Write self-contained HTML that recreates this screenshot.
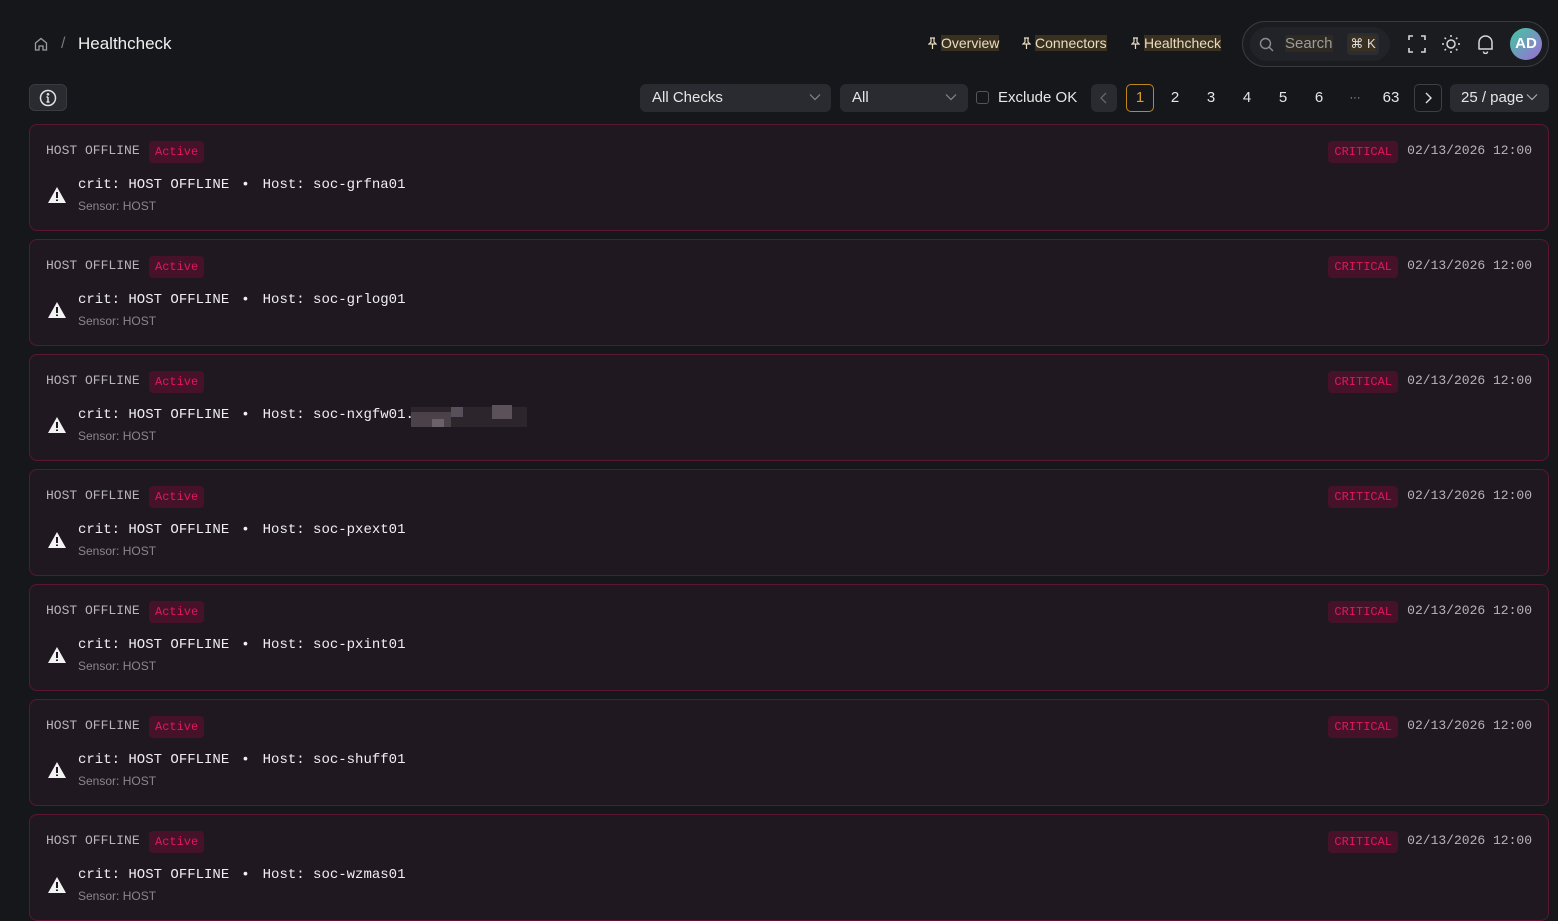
<!DOCTYPE html>
<html><head><meta charset="utf-8"><style>
*{box-sizing:border-box;margin:0;padding:0}
body{width:1558px;height:918px;overflow:hidden;background:#16171b;font-family:"Liberation Sans",sans-serif;color:#e6e6e6;position:relative}
.abs{position:absolute}
.mono{font-family:"Liberation Mono",monospace}
.nav{position:absolute;top:35px;font-size:14px;color:#e8dcc0;white-space:nowrap}
.nav span{background:#3a3020}
.nav svg{vertical-align:-1px;margin-right:4px}
.pill{background:#2a2b30;border-radius:6px}
.card{position:absolute;left:29px;width:1520px;height:107px;background:#201820;border:1px solid #5c1630;border-radius:8px}
.t{position:absolute;left:16px;top:18px;font-size:13px;color:#b8b4bc}
.badge{position:absolute;background:#45122a;color:#e0185a;border-radius:4px;font-size:12px;height:22px;line-height:22px;padding:0 6px}
.main{position:absolute;left:48px;top:52px;font-size:14px;color:#f0eef2;white-space:pre}
.main b{font-weight:normal;margin:0 13px 0 12px}
.sen{position:absolute;left:48px;top:74px;font-size:12px;color:#8a8590}
.date{position:absolute;right:16px;top:18px;font-size:13px;color:#b8b4bc}
.warn{position:absolute;left:17px;top:61px}
.pg{position:absolute;top:87px;font-size:15px;color:#e6e6e6;width:28px;text-align:center;line-height:22px}
</style></head><body>
<svg class="abs" style="left:33px;top:36px" width="16" height="16" viewBox="0 0 16 16" fill="none" stroke="#9a9ca2" stroke-width="1.3"><path d="M2.5 7 8 2.5 13.5 7V14H10V10H6V14H2.5Z"/></svg>
<div class="abs" style="left:61px;top:35px;font-size:16px;color:#777">/</div>
<div class="abs" style="left:78px;top:34px;font-size:17px;color:#f0f0f0">Healthcheck</div>
<div class="nav" style="left:928px"><svg width="9" height="12" viewBox="0 0 9 12" fill="none" stroke="#e8dcc0" stroke-width="1.2"><path d="M2 1h5M3 1v4L1 7h7L6 5V1M4.5 7v5"/></svg><span>Overview</span></div>
<div class="nav" style="left:1022px"><svg width="9" height="12" viewBox="0 0 9 12" fill="none" stroke="#e8dcc0" stroke-width="1.2"><path d="M2 1h5M3 1v4L1 7h7L6 5V1M4.5 7v5"/></svg><span>Connectors</span></div>
<div class="nav" style="left:1131px"><svg width="9" height="12" viewBox="0 0 9 12" fill="none" stroke="#e8dcc0" stroke-width="1.2"><path d="M2 1h5M3 1v4L1 7h7L6 5V1M4.5 7v5"/></svg><span>Healthcheck</span></div>
<div class="abs" style="left:1242px;top:21px;width:307px;height:46px;border:1px solid #3a3b40;border-radius:23px;background:#1b1c20"></div>
<div class="abs" style="left:1250px;top:27px;width:140px;height:34px;border-radius:17px;background:#222328"></div>
<svg class="abs" style="left:1259px;top:37px" width="15" height="15" viewBox="0 0 15 15" fill="none" stroke="#8a8c92" stroke-width="1.4"><circle cx="6.5" cy="6.5" r="5"/><path d="M10.2 10.2 14 14"/></svg>
<div class="abs" style="left:1285px;top:35px;font-size:15px;color:#9a9ca0;background:#2e2a22">Search</div>
<div class="abs" style="left:1347px;top:33px;width:32px;height:22px;background:#2c2d32;border-radius:4px;font-size:13px;color:#ddd;line-height:22px;text-align:center"><span style="background:#3a3020">⌘ K</span></div>
<svg class="abs" style="left:1408px;top:35px" width="18" height="18" viewBox="0 0 18 18" fill="none" stroke="#d8d8d8" stroke-width="1.6"><path d="M1 5V1H5M13 1H17V5M17 13V17H13M5 17H1V13"/></svg>
<svg class="abs" style="left:1441px;top:34px" width="20" height="20" viewBox="0 0 20 20" fill="none" stroke="#d8d8d8" stroke-width="1.5"><circle cx="10" cy="10" r="4"/><path d="M10 1v2M10 17v2M1 10h2M17 10h2M3.6 3.6l1.4 1.4M15 15l1.4 1.4M3.6 16.4 5 15M15 5l1.4-1.4"/></svg>
<svg class="abs" style="left:1476px;top:34px" width="19" height="20" viewBox="0 0 19 20" fill="none" stroke="#d8d8d8" stroke-width="1.5"><path d="M3 15V8.5a6.5 6.5 0 0 1 13 0V15H2.5h14M7.5 17.5a2 2 0 0 0 4 0"/></svg>
<div class="abs" style="left:1510px;top:28px;width:32px;height:32px;border-radius:50%;background:linear-gradient(135deg,#3fc9a0,#a06ad8);color:#fff;font-size:15px;font-weight:bold;text-align:center;line-height:32px">AD</div>
<div class="abs pill" style="left:29px;top:84px;width:38px;height:27px;border:1px solid #3a3b40"></div>
<svg class="abs" style="left:39px;top:89px" width="18" height="18" viewBox="0 0 18 18" fill="none" stroke="#e0e0e0" stroke-width="1.5"><circle cx="9" cy="9" r="7.5"/><path d="M9 8v5M7.5 13h3M7.5 8H9"/><circle cx="9" cy="5.3" r=".6" fill="#e0e0e0"/></svg>
<div class="abs pill" style="left:640px;top:84px;width:191px;height:28px"></div>
<div class="abs" style="left:652px;top:89px;font-size:15px">All Checks</div>
<svg class="abs" style="left:809px;top:93px" width="12" height="8" viewBox="0 0 12 8" fill="none" stroke="#888" stroke-width="1.2"><path d="M1 1.5 6 6.5 11 1.5"/></svg>
<div class="abs pill" style="left:840px;top:84px;width:128px;height:28px"></div>
<div class="abs" style="left:852px;top:89px;font-size:15px">All</div>
<svg class="abs" style="left:945px;top:93px" width="12" height="8" viewBox="0 0 12 8" fill="none" stroke="#888" stroke-width="1.2"><path d="M1 1.5 6 6.5 11 1.5"/></svg>
<div class="abs" style="left:976px;top:91px;width:13px;height:13px;border:1px solid #555;border-radius:3px"></div>
<div class="abs" style="left:998px;top:89px;font-size:15px">Exclude OK</div>
<div class="abs pill" style="left:1091px;top:84px;width:26px;height:28px"></div>
<svg class="abs" style="left:1100px;top:92px" width="7" height="12" viewBox="0 0 7 12" fill="none" stroke="#666" stroke-width="1.3"><path d="M6 1 1 6l5 5"/></svg>
<div class="abs" style="left:1126px;top:84px;width:28px;height:28px;border:1px solid #c0881c;border-radius:5px;color:#d9a030;text-align:center;line-height:26px;font-size:15px">1</div>
<div class="pg" style="left:1161px">2</div><div class="pg" style="left:1197px">3</div><div class="pg" style="left:1233px">4</div><div class="pg" style="left:1269px">5</div><div class="pg" style="left:1305px">6</div><div class="pg" style="left:1341px;font-size:11px;color:#aaa">···</div><div class="pg" style="left:1377px">63</div>
<div class="abs" style="left:1414px;top:84px;width:28px;height:28px;border:1px solid #3e3f44;border-radius:5px"></div>
<svg class="abs" style="left:1425px;top:92px" width="7" height="12" viewBox="0 0 7 12" fill="none" stroke="#e0e0e0" stroke-width="1.4"><path d="M1 1l5 5-5 5"/></svg>
<div class="abs pill" style="left:1450px;top:84px;width:99px;height:28px"></div>
<div class="abs" style="left:1461px;top:89px;font-size:15px">25 / page</div>
<svg class="abs" style="left:1526px;top:93px" width="12" height="8" viewBox="0 0 12 8" fill="none" stroke="#aaa" stroke-width="1.2"><path d="M1 1.5 6 6.5 11 1.5"/></svg>

<div class="card" style="top:124px"><div class="t mono">HOST OFFLINE</div><div class="badge mono" style="left:119px;top:16px">Active</div><div class="badge mono" style="right:150px;top:16px">CRITICAL</div><div class="date mono">02/13/2026 12:00</div><svg class="warn" width="20" height="18" viewBox="0 0 20 18"><path d="M10 1 19 17H1Z" fill="#f2f2f2"/><path d="M10 6v6M10 13.5v1.5" stroke="#201820" stroke-width="2"/></svg><div class="main mono">crit: HOST OFFLINE<b>•</b>Host: soc-grfna01</div><div class="sen">Sensor: HOST</div></div>
<div class="card" style="top:239px"><div class="t mono">HOST OFFLINE</div><div class="badge mono" style="left:119px;top:16px">Active</div><div class="badge mono" style="right:150px;top:16px">CRITICAL</div><div class="date mono">02/13/2026 12:00</div><svg class="warn" width="20" height="18" viewBox="0 0 20 18"><path d="M10 1 19 17H1Z" fill="#f2f2f2"/><path d="M10 6v6M10 13.5v1.5" stroke="#201820" stroke-width="2"/></svg><div class="main mono">crit: HOST OFFLINE<b>•</b>Host: soc-grlog01</div><div class="sen">Sensor: HOST</div></div>
<div class="card" style="top:354px"><div class="t mono">HOST OFFLINE</div><div class="badge mono" style="left:119px;top:16px">Active</div><div class="badge mono" style="right:150px;top:16px">CRITICAL</div><div class="date mono">02/13/2026 12:00</div><svg class="warn" width="20" height="18" viewBox="0 0 20 18"><path d="M10 1 19 17H1Z" fill="#f2f2f2"/><path d="M10 6v6M10 13.5v1.5" stroke="#201820" stroke-width="2"/></svg><div class="main mono">crit: HOST OFFLINE<b>•</b>Host: soc-nxgfw01.</div>
<div class="abs" style="left:381px;top:52px;width:116px;height:20px;background:#2c262c"></div><div class="abs" style="left:381px;top:57px;width:40px;height:15px;background:#4a4248"></div><div class="abs" style="left:421px;top:52px;width:12px;height:10px;background:#57505a"></div><div class="abs" style="left:462px;top:50px;width:20px;height:14px;background:#5a5258"></div><div class="abs" style="left:402px;top:64px;width:12px;height:8px;background:#6a6268"></div>
<div class="sen">Sensor: HOST</div></div>
<div class="card" style="top:469px"><div class="t mono">HOST OFFLINE</div><div class="badge mono" style="left:119px;top:16px">Active</div><div class="badge mono" style="right:150px;top:16px">CRITICAL</div><div class="date mono">02/13/2026 12:00</div><svg class="warn" width="20" height="18" viewBox="0 0 20 18"><path d="M10 1 19 17H1Z" fill="#f2f2f2"/><path d="M10 6v6M10 13.5v1.5" stroke="#201820" stroke-width="2"/></svg><div class="main mono">crit: HOST OFFLINE<b>•</b>Host: soc-pxext01</div><div class="sen">Sensor: HOST</div></div>
<div class="card" style="top:584px"><div class="t mono">HOST OFFLINE</div><div class="badge mono" style="left:119px;top:16px">Active</div><div class="badge mono" style="right:150px;top:16px">CRITICAL</div><div class="date mono">02/13/2026 12:00</div><svg class="warn" width="20" height="18" viewBox="0 0 20 18"><path d="M10 1 19 17H1Z" fill="#f2f2f2"/><path d="M10 6v6M10 13.5v1.5" stroke="#201820" stroke-width="2"/></svg><div class="main mono">crit: HOST OFFLINE<b>•</b>Host: soc-pxint01</div><div class="sen">Sensor: HOST</div></div>
<div class="card" style="top:699px"><div class="t mono">HOST OFFLINE</div><div class="badge mono" style="left:119px;top:16px">Active</div><div class="badge mono" style="right:150px;top:16px">CRITICAL</div><div class="date mono">02/13/2026 12:00</div><svg class="warn" width="20" height="18" viewBox="0 0 20 18"><path d="M10 1 19 17H1Z" fill="#f2f2f2"/><path d="M10 6v6M10 13.5v1.5" stroke="#201820" stroke-width="2"/></svg><div class="main mono">crit: HOST OFFLINE<b>•</b>Host: soc-shuff01</div><div class="sen">Sensor: HOST</div></div>
<div class="card" style="top:814px"><div class="t mono">HOST OFFLINE</div><div class="badge mono" style="left:119px;top:16px">Active</div><div class="badge mono" style="right:150px;top:16px">CRITICAL</div><div class="date mono">02/13/2026 12:00</div><svg class="warn" width="20" height="18" viewBox="0 0 20 18"><path d="M10 1 19 17H1Z" fill="#f2f2f2"/><path d="M10 6v6M10 13.5v1.5" stroke="#201820" stroke-width="2"/></svg><div class="main mono">crit: HOST OFFLINE<b>•</b>Host: soc-wzmas01</div><div class="sen">Sensor: HOST</div></div>
</body></html>
